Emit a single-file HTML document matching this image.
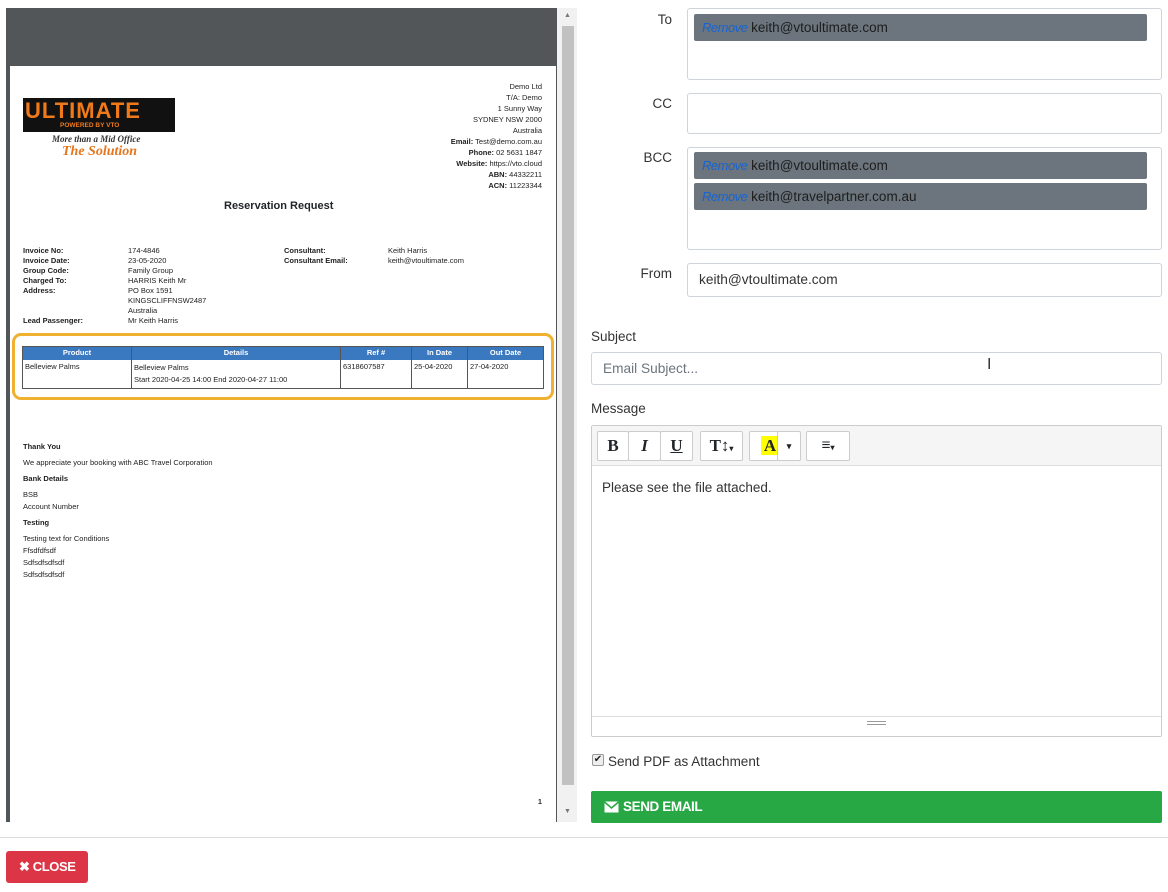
<!DOCTYPE html>
<html><head><meta charset="utf-8"><style>
*{box-sizing:border-box;margin:0;padding:0}
body{width:1168px;height:892px;background:#fff;font-family:"Liberation Sans",sans-serif;position:relative;overflow:hidden;color:#212529}
.a{position:absolute}
.pdf{font-size:7.5px;color:#222;line-height:10px}
.b{font-weight:bold}
.lbl{position:absolute;font-size:13.5px;color:#333;text-align:right;width:90px;left:582px}
.box{position:absolute;left:687px;width:475px;border:1px solid #ced4da;border-radius:3px;background:#fff}
.tag{position:absolute;left:6px;right:14px;height:27px;background:#6c757d;border-radius:2px;font-size:13.5px;color:#1d1d1d;line-height:27px;padding-left:8px}
.tag i{color:#1864d0;font-style:italic;font-size:13px;letter-spacing:-0.5px}
.tb{position:absolute;top:5px;height:30px;border:1px solid #ccc;background:#fff;border-radius:2px;font-family:"Liberation Serif",serif;font-weight:bold;font-size:17px;text-align:center;line-height:28px}
table{border-collapse:collapse}
</style></head><body>
<div class="a" style="left:6px;top:8px;width:551px;height:814px;background:#525659"></div>
<div class="a" style="left:10px;top:66px;width:546px;height:756px;background:#fff"></div>
<div class="a" style="left:557px;top:8px;width:20px;height:814px;background:#f1f1f1"></div>
<div class="a" style="left:562px;top:26px;width:12px;height:759px;background:#c1c1c1"></div>
<div class="a" style="left:564px;top:12px;font-size:7px;color:#777">▲</div>
<div class="a" style="left:564px;top:808px;font-size:7px;color:#777">▼</div>
<div class="a" style="left:23px;top:98px;width:152px;height:34px;background:#111"></div>
<div class="a" style="left:25px;top:98px;font:bold 22px 'Liberation Sans',sans-serif;color:#f07a1a;letter-spacing:1px">ULTIMATE</div>
<div class="a" style="left:60px;top:122px;font:bold 6.5px 'Liberation Sans',sans-serif;color:#f07a1a">POWERED BY VTO</div>
<div class="a" style="left:52px;top:134px;font:italic bold 9px 'Liberation Serif',serif;color:#333">More than a Mid Office</div>
<div class="a" style="left:62px;top:144px;font:italic bold 14px 'Liberation Serif',serif;color:#e4761e">The Solution</div>
<div class="a pdf" style="right:626px;top:81px;text-align:right;line-height:11px">Demo Ltd<br>T/A: Demo<br>1 Sunny Way<br>SYDNEY NSW 2000<br>Australia<br><b>Email:</b> Test@demo.com.au<br><b>Phone:</b> 02 5631 1847<br><b>Website:</b> https://vto.cloud<br><b>ABN:</b> 44332211<br><b>ACN:</b> 11223344</div>
<div class="a b" style="left:224px;top:200px;font-size:11px">Reservation Request</div>
<div class="a pdf b" style="left:23px;top:246px">Invoice No:<br>Invoice Date:<br>Group Code:<br>Charged To:<br>Address:<br><br><br>Lead Passenger:</div>
<div class="a pdf" style="left:128px;top:246px">174-4846<br>23-05-2020<br>Family Group<br>HARRIS Keith Mr<br>PO Box 1591<br>KINGSCLIFFNSW2487<br>Australia<br>Mr Keith Harris</div>
<div class="a pdf b" style="left:284px;top:246px">Consultant:<br>Consultant Email:</div>
<div class="a pdf" style="left:388px;top:246px">Keith Harris<br>keith@vtoultimate.com</div>
<div class="a" style="left:12px;top:333px;width:542px;height:67px;border:3px solid #f0b030;border-radius:9px"></div>
<table class="a pdf" style="left:22px;top:346px;width:522px;border:1px solid #555">
<tr style="background:#3a78c0;color:#fff;font-weight:bold;height:13px;text-align:center"><td style="width:109px;border-right:1px solid #555">Product</td><td style="width:209px;border-right:1px solid #555">Details</td><td style="width:71px;border-right:1px solid #555">Ref #</td><td style="width:56px;border-right:1px solid #555">In Date</td><td>Out Date</td></tr>
<tr style="height:29px;vertical-align:top"><td style="border-right:1px solid #555;padding:2px">Belleview Palms</td><td style="border-right:1px solid #555;padding:2px;line-height:12px">Belleview Palms<br>Start 2020-04-25 14:00 End 2020-04-27 11:00</td><td style="border-right:1px solid #555;padding:2px">6318607587</td><td style="border-right:1px solid #555;padding:2px">25-04-2020</td><td style="padding:2px">27-04-2020</td></tr></table>
<div class="a pdf" style="left:23px;top:441px;line-height:12px"><b>Thank You</b><br><span style="line-height:20px">We appreciate your booking with ABC Travel Corporation</span><br><b>Bank Details</b><br><span style="display:inline-block;margin-top:4px">BSB</span><br>Account Number<br><b style="display:inline-block;margin-top:4px">Testing</b><br><span style="display:inline-block;margin-top:4px">Testing text for Conditions</span><br>Ffsdfdfsdf<br>Sdfsdfsdfsdf<br>Sdfsdfsdfsdf</div>
<div class="a pdf b" style="left:538px;top:798px;font-size:7px">1</div>
<div class="lbl" style="top:12px">To</div>
<div class="box" style="top:8px;height:72px"><div class="tag" style="top:5px"><i>Remove</i> keith@vtoultimate.com</div></div>
<div class="lbl" style="top:96px">CC</div>
<div class="box" style="top:93px;height:41px"></div>
<div class="lbl" style="top:150px">BCC</div>
<div class="box" style="top:147px;height:103px"><div class="tag" style="top:4px"><i>Remove</i> keith@vtoultimate.com</div><div class="tag" style="top:35px"><i>Remove</i> keith@travelpartner.com.au</div></div>
<div class="lbl" style="top:266px">From</div>
<div class="box" style="top:263px;height:34px;font-size:13.7px;line-height:32px;padding-left:11px;color:#333">keith@vtoultimate.com</div>
<div class="a" style="left:591px;top:329px;font-size:13.5px;color:#333">Subject</div>
<div class="a" style="left:591px;top:352px;width:571px;height:33px;border:1px solid #ced4da;border-radius:3px;font-size:13.7px;line-height:31px;padding-left:11px;color:#6c757d">Email Subject...</div>
<div class="a" style="left:987px;top:356px;font-size:16px;color:#333">I</div>
<div class="a" style="left:591px;top:401px;font-size:13.5px;color:#333">Message</div>
<div class="a" style="left:591px;top:425px;width:571px;height:312px;border:1px solid #ccc;border-radius:2px">
<div class="a" style="left:0;top:0;width:569px;height:40px;background:#f5f5f5;border-bottom:1px solid #ddd"></div>
<div class="tb" style="left:5px;width:32px">B</div><div class="tb" style="left:36px;width:33px;font-style:italic">I</div><div class="tb" style="left:68px;width:33px;text-decoration:underline">U</div>
<div class="tb" style="left:108px;width:43px">T↕<span style="font-size:8px">▾</span></div>
<div class="tb" style="left:157px;width:42px"><span style="background:#ff0;padding:0 3px">A</span></div><div class="tb" style="left:185px;width:24px;font-size:9px">▾</div>
<div class="tb" style="left:214px;width:44px;font-size:16px">≡<span style="font-size:8px">▾</span></div>
<div class="a" style="left:10px;top:54px;font-size:13.5px;color:#333">Please see the file attached.</div>
<div class="a" style="left:0;top:290px;width:569px;height:20px;border-top:1px solid #ddd;background:#fff"></div>
<div class="a" style="left:275px;top:295px;width:19px;height:4px;border-top:1px solid #999;border-bottom:1px solid #999"></div>
</div>
<div class="a" style="left:592px;top:754px;width:12px;height:12px;border:1px solid #999;border-radius:2px;background:#eee;font-size:10px;line-height:10px;text-align:center">✔</div>
<div class="a" style="left:608px;top:754px;font-size:13.5px;color:#333">Send PDF as Attachment</div>
<div class="a" style="left:591px;top:791px;width:571px;height:32px;background:#28a745;border-radius:2px;color:#fff;font-weight:bold;font-size:13.5px;line-height:32px;padding-left:32px;letter-spacing:-0.4px">SEND EMAIL</div>
<svg class="a" style="left:604px;top:801px" width="15" height="12" viewBox="0 0 15 12"><rect x="0.5" y="0.5" width="14" height="11" fill="#fff"/><path d="M0.5 1 L7.5 7 L14.5 1" fill="none" stroke="#28a745" stroke-width="1.5"/></svg>
<div class="a" style="left:0;top:837px;width:1168px;height:1px;background:#ddd"></div>
<div class="a" style="left:6px;top:851px;width:82px;height:32px;background:#dc3545;border-radius:3px;color:#fff;font-weight:bold;font-size:13px;line-height:32px;padding-left:13px;letter-spacing:-0.4px">✖ CLOSE</div>
</body></html>
